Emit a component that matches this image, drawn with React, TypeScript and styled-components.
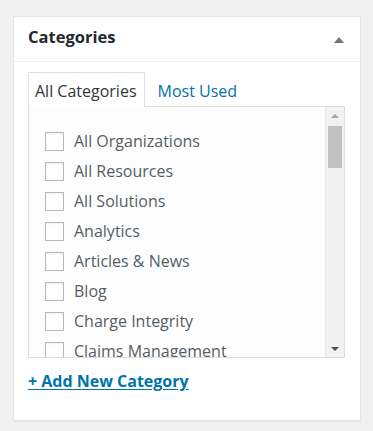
import React from "react";
import styled, { createGlobalStyle } from "styled-components";

const GlobalStyle = createGlobalStyle`
  html, body {
    margin: 0;
    padding: 0;
    background: #f1f1f1;
    font-family: "Open Sans", "Noto Sans", sans-serif;
    color: #444;
  }
`;

const Page = styled.div`
  padding: 16px 12px 10px 13px;
`;

const Box = styled.div`
  background: #fff;
  border: 1px solid #e5e5e5;
  box-shadow: 0 1px 1px rgba(0, 0, 0, 0.04);
  height: 405px;
  box-sizing: border-box;
`;

const Header = styled.div`
  display: flex;
  align-items: center;
  justify-content: space-between;
  height: 45px;
  box-sizing: border-box;
  padding: 0 16px 5px 14px;
  border-bottom: 1px solid #eee;
`;

const Title = styled.h2`
  margin: 0;
  font-size: 16.5px;
  font-weight: 700;
  color: #23282d;
`;

const Toggle = styled.span`
  width: 0;
  height: 0;
  border-left: 5px solid transparent;
  border-right: 5px solid transparent;
  border-bottom: 6px solid #72777c;
  margin-top: 7px;
`;

const Inside = styled.div`
  padding: 10px 15px 0 14px;
`;

const Tabs = styled.div`
  display: flex;
  align-items: flex-end;
`;

const Tab = styled.div<{ $active?: boolean }>`
  height: 35px;
  box-sizing: border-box;
  display: flex;
  align-items: center;
  padding: 1px 7px 0 6px;
  font-size: 16px;
  margin-bottom: -1px;
  position: relative;
  border: 1px solid ${(p) => (p.$active ? "#ddd" : "transparent")};
  border-bottom: none;
  background: ${(p) => (p.$active ? "#fff" : "transparent")};
  color: ${(p) => (p.$active ? "#32373c" : "#0073aa")};
  margin-right: ${(p) => (p.$active ? "6px" : "0")};
`;

const Panel = styled.div`
  display: flex;
  height: 252px;
  box-sizing: border-box;
  border: 1px solid #ddd;
  background: #fdfdfd;
`;

const List = styled.ul`
  flex: 1;
  margin: 0;
  list-style: none;
  padding: 19px 0 0 16px;
  overflow: hidden;
`;

const Item = styled.li`
  display: flex;
  align-items: center;
  height: 30px;
  font-size: 16px;
  color: #555d66;
  white-space: nowrap;
`;

const Check = styled.span`
  width: 19px;
  height: 19px;
  box-sizing: border-box;
  border: 1px solid #b4b9be;
  background: #fff;
  box-shadow: inset 0 1px 2px rgba(0, 0, 0, 0.07);
  margin-right: 10px;
  flex-shrink: 0;
`;

const Scrollbar = styled.div`
  width: 18px;
  display: flex;
  flex-direction: column;
  align-items: center;
  background: #f1f1f1;
  border-left: 1px solid #e8e8e8;
`;

const Arrow = styled.span<{ $down?: boolean }>`
  height: 17px;
  width: 100%;
  display: flex;
  align-items: center;
  justify-content: center;
  &::after {
    content: "";
    width: 0;
    height: 0;
    border-left: 4px solid transparent;
    border-right: 4px solid transparent;
    ${(p) =>
      p.$down
        ? "border-top: 4px solid #505050;"
        : "border-bottom: 4px solid #a3a3a3;"}
  }
`;

const Thumb = styled.div`
  width: 14px;
  height: 42px;
  margin-top: 2px;
  background: #c1c1c1;
`;

const Spacer = styled.div`
  flex: 1;
`;

const AddLink = styled.a`
  display: inline-block;
  margin-top: 12px;
  font-size: 16px;
  font-weight: 700;
  color: #0073aa;
  text-decoration: underline;
  text-underline-offset: 2px;
`;

const categories = [
  "All Organizations",
  "All Resources",
  "All Solutions",
  "Analytics",
  "Articles & News",
  "Blog",
  "Charge Integrity",
  "Claims Management",
  "Clinical Documentation",
];

export default function App() {
  return (
    <>
      <GlobalStyle />
      <Page>
        <Box>
          <Header>
            <Title>Categories</Title>
            <Toggle />
          </Header>
          <Inside>
            <Tabs>
              <Tab $active>All Categories</Tab>
              <Tab>Most Used</Tab>
            </Tabs>
            <Panel>
              <List>
                {categories.map((c) => (
                  <Item key={c}>
                    <Check />
                    {c}
                  </Item>
                ))}
              </List>
              <Scrollbar>
                <Arrow />
                <Thumb />
                <Spacer />
                <Arrow $down />
              </Scrollbar>
            </Panel>
            <AddLink href="#">+ Add New Category</AddLink>
          </Inside>
        </Box>
      </Page>
    </>
  );
}
